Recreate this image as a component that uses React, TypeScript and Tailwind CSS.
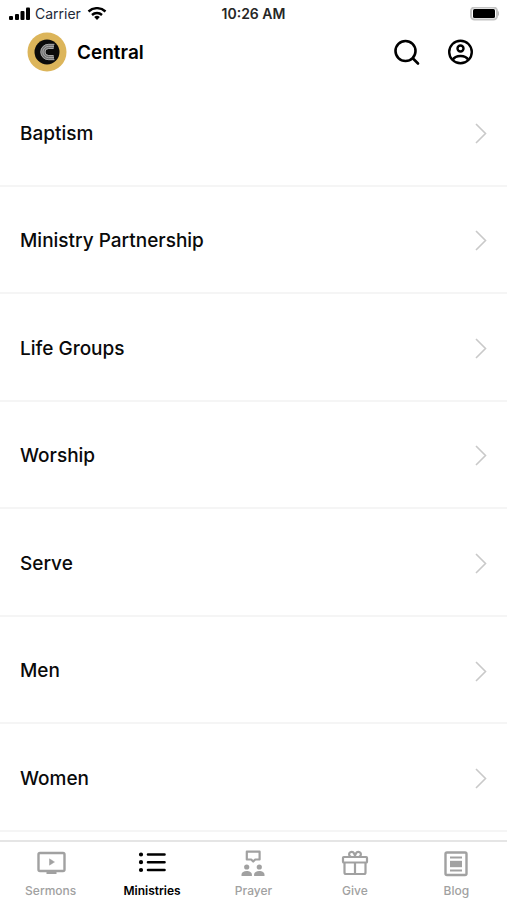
import { useState } from 'react'

const ministries = [
  'Baptism',
  'Ministry Partnership',
  'Life Groups',
  'Worship',
  'Serve',
  'Men',
  'Women',
]

const tabs = [
  {
    label: 'Sermons',
    icon: (
      <svg viewBox="0 0 30 28" fill="none" className="w-[30px] h-7">
        <rect x="2.500" y="3" width="26" height="18" rx="1.500" stroke="currentColor" strokeWidth={2.4} />
        <path d="M13.500 8.800v6.400l5-3.200z" fill="currentColor" stroke="currentColor" strokeWidth={0.5} />
        <path d="M10.500 21h10v3h-10z" fill="currentColor" />
      </svg>
    ),
  },
  {
    label: 'Ministries',
    icon: (
      <svg viewBox="0 0 30 28" fill="none" stroke="currentColor" strokeLinecap="round" className="w-[30px] h-7">
        <path d="M11 4.500h16.500M11 12.200h16.500M11 20h16.500" strokeWidth={2.6} />
        <path d="M4 4.500h.01M4 12.200h.01M4 20h.01" strokeWidth={4.2} />
      </svg>
    ),
  },
  {
    label: 'Prayer',
    icon: (
      <svg viewBox="0 0 30 28" fill="none" className="w-[30px] h-7">
        <path d="M8.800 1.700h12.800v7.800h-4.400L15.200 11.500 13.200 9.500H8.800z" stroke="currentColor" strokeWidth={2.2} strokeLinejoin="round" />
        <circle cx="8.700" cy="17" r="2.600" fill="currentColor" />
        <circle cx="21.300" cy="17" r="2.600" fill="currentColor" />
        <path d="M3.500 26v-1.500c0-2.200 2.400-3.500 5.200-3.500s5.200 1.300 5.200 3.500V26zM16.100 26v-1.500c0-2.200 2.400-3.500 5.200-3.500s5.200 1.300 5.200 3.500V26z" fill="currentColor" />
      </svg>
    ),
  },
  {
    label: 'Give',
    icon: (
      <svg viewBox="0 0 30 28" fill="none" stroke="currentColor" strokeWidth={2.2} className="w-[30px] h-7">
        <rect x="3" y="7" width="24" height="5.500" rx="0.800" />
        <path d="M4.500 12.500v10A1.500 1.500 0 0 0 6 24h18a1.500 1.500 0 0 0 1.500-1.500v-10M15 12.500V24" />
        <path d="M15 7h-3.500a2.600 2.600 0 1 1 2.500-3.800L15 5.500l1-2.300A2.600 2.600 0 1 1 18.500 7z" />
      </svg>
    ),
  },
  {
    label: 'Blog',
    icon: (
      <svg viewBox="0 0 30 28" fill="none" stroke="currentColor" className="w-[30px] h-7">
        <rect x="4.500" y="2.500" width="21" height="22.500" rx="1.500" strokeWidth={2.4} />
        <path d="M9 7.500h12M9 20.500h12" strokeWidth={2} />
        <path d="M9 14h12" strokeWidth={6.4} />
      </svg>
    ),
  },
]

function StatusBar() {
  return (
    <div className="grid h-7 grid-cols-3 items-center px-2 text-sm">
      <div className="flex items-center gap-1">
        <svg viewBox="0 0 23 14" fill="currentColor" className="w-[23px] h-3.5">
          <rect x="1" y="9" width="4" height="4" rx="1" />
          <rect x="7" y="7" width="4" height="6" rx="1" />
          <rect x="12.500" y="4" width="4" height="9" rx="1" />
          <rect x="18" y="0.500" width="4" height="12.500" rx="1" />
        </svg>
        <span className="text-gray-800">Carrier</span>
        <svg viewBox="0 0 20 14" fill="none" stroke="currentColor" strokeWidth={2.4} className="ml-0.5 w-5 h-3.5">
          <path d="M1.500 4.500a12.500 12.500 0 0 1 17 0M5 8a7.400 7.400 0 0 1 10 0" />
          <path d="M10 13l-2.800-3a4 4 0 0 1 5.600 0z" fill="currentColor" stroke="none" />
        </svg>
      </div>
      <span className="text-center font-semibold text-neutral-800">10:26 AM</span>
      <svg viewBox="0 0 30 14" className="h-3.5 w-[30px] justify-self-end">
        <rect x="2" y="0.500" width="26" height="12" rx="3.500" fill="#fff" stroke="#c4c4c4" strokeWidth={2} />
        <rect x="4" y="2" width="22" height="9" rx="1.500" fill="#000" />
        <path d="M29 4c1.500.8 1.500 4.200 0 5z" fill="#bdbdbd" />
      </svg>
    </div>
  )
}

function Logo() {
  return (
    <svg viewBox="0 0 40 40" fill="none" className="size-10 shrink-0">
      <circle cx="20" cy="20" r="19.500" fill="#dcb55a" />
      <circle cx="20" cy="20" r="12.500" fill="#0b0b0b" />
      {/* Striped C */}
      <path d="M27 14.500h-5.500a5.500 5.500 0 0 0 0 11H27" stroke="#6f6f6f" strokeWidth={5} />
      <g stroke="#b0b0b0" strokeWidth={0.9}>
        <path d="M27.500 12.300h-6a7.700 7.700 0 0 0 0 15.400h6" />
        <path d="M27 14.400h-5.500a5.600 5.600 0 0 0 0 11.200H27" />
        <path d="M26 16.500h-4.500a3.500 3.500 0 0 0 0 7H26" />
      </g>
    </svg>
  )
}

export default function App() {
  const [active, setActive] = useState('Ministries')

  return (
    <div className="flex min-h-screen flex-col bg-white font-['Inter',sans-serif] text-black">
      <StatusBar />

      <header className="flex h-12 items-center pl-[27px] pr-8">
        <Logo />
        <h1 className="ml-2.5 pt-0.5 text-[19px] font-semibold">Central</h1>
        <div className="ml-auto flex gap-6">
          <button aria-label="Search">
            <svg viewBox="0 0 30 30" fill="none" stroke="currentColor" strokeWidth={2.6} strokeLinecap="round" className="size-[30px]">
              <circle cx="14.500" cy="14" r="10" />
              <path d="M22 21.500l5 5" />
            </svg>
          </button>
          <button aria-label="Profile">
            <svg viewBox="0 0 30 30" fill="none" stroke="currentColor" strokeWidth={2.4} className="size-[30px]">
              <circle cx="15.500" cy="15" r="11.300" />
              <circle cx="15.500" cy="11.500" r="3" />
              <path d="M7.700 23c1.500-3 4.500-4 7.800-4s6.300 1 7.800 4" />
            </svg>
          </button>
        </div>
      </header>

      {/* Ministry list */}
      <main className="flex flex-1 pb-2 pt-[3px]">
        <ul className="grid flex-1 auto-rows-fr">
          {ministries.map((name) => (
            <li key={name} className="flex border-b-2 border-neutral-100">
              <a href="#" className="flex flex-1 items-center justify-between px-5 pb-6 pt-7 text-[19px] font-medium text-neutral-950">
                {name}
                <svg viewBox="0 0 12 22" fill="none" stroke="#c9c9c9" strokeWidth={1.6} className="h-[22px] w-3">
                  <path d="M1 1l9.500 9.500L1 20" />
                </svg>
              </a>
            </li>
          ))}
        </ul>
      </main>

      {/* Tab bar */}
      <nav className="sticky bottom-0 grid grid-cols-5 border-t-2 border-neutral-200 bg-white pb-px pt-2">
        {tabs.map((tab) => (
          <button
            key={tab.label}
            onClick={() => setActive(tab.label)}
            className={`flex flex-col items-center gap-[5px] text-xs ${
              active === tab.label ? 'font-semibold text-black' : 'font-medium text-neutral-400'
            }`}
          >
            {tab.icon}
            <span>{tab.label}</span>
          </button>
        ))}
      </nav>
    </div>
  )
}
